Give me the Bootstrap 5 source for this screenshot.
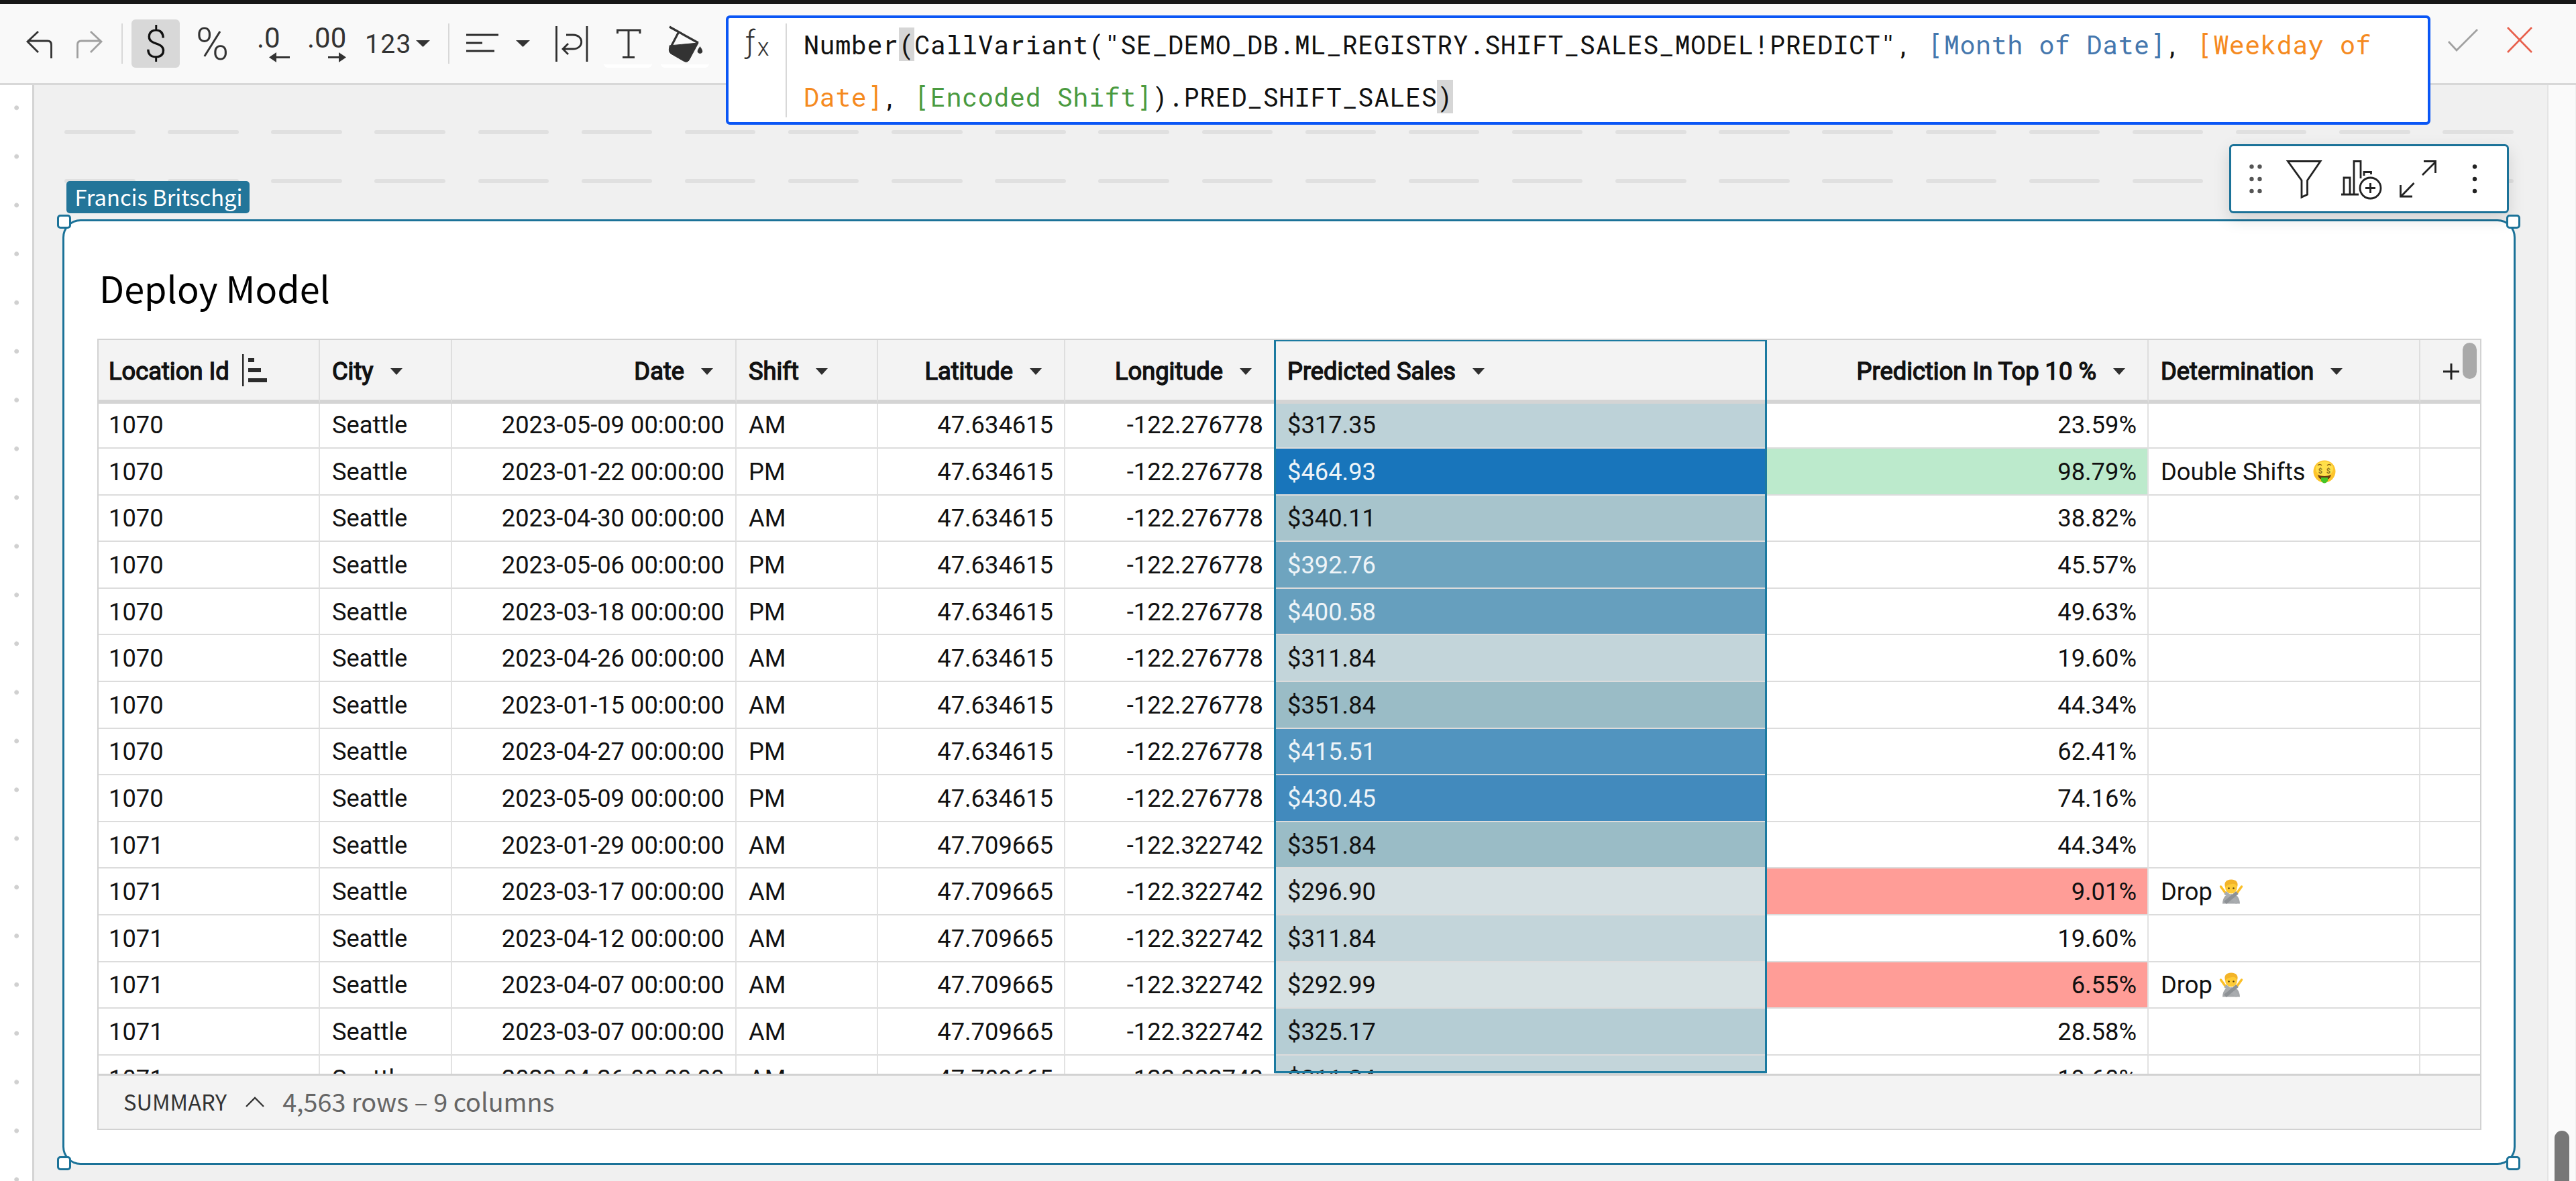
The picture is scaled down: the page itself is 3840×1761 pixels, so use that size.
<!DOCTYPE html>
<html lang="en">
<head>
    <meta charset="UTF-8">
    <meta name="viewport" content="width=device-width, initial-scale=1.0">
    <title>Deploy Model</title>
    <link href="https://cdn.jsdelivr.net/npm/bootstrap@5.3.3/dist/css/bootstrap.min.css" rel="stylesheet">
    <style>
        body { height: 1761px; font-family: Roboto, sans-serif; font-size: 36.3px; color: #111; background: #fff; }
        svg { display: block; flex: none; overflow: visible; }
        .ui-font { font-family: "Noto Sans CJK SC", sans-serif; }

        /* top toolbar */
        .topbar { height: 127px; flex: none; background: #f9f9f9; border-top: 6px solid #171717; border-bottom: 3px solid #d8d8d8; position: relative; z-index: 5; padding-left: 23px; }
        .tool { width: 72px; height: 72px; margin-top: 23px; flex: none; }
        .tool-on { background: #d8d8d8; border-radius: 6px; }
        .tool-color { border-bottom: 5px solid #fff; border-radius: 0 0 6px 6px; }
        .tool-sep { width: 2px; height: 60px; margin-top: 29px; background: #d8d8d8; flex: none; }
        .tool-num { margin-top: 37px; height: 46px; line-height: 46px; font-size: 39px; letter-spacing: 1.3px; color: #333; width: 76px; flex: none; }
        .formula { width: 2541px; height: 163px; margin: 17px 0 0 25px; border: 4px solid #0a56f5; border-radius: 6px; flex: none; }
        .formula-sep { width: 2px; height: 140px; margin: 8px 25px 0 24px; background: #d8d8d8; flex: none; }
        .formula-text { font-family: "Roboto Mono", "DejaVu Sans Mono", monospace; font-size: 38.4px; letter-spacing: .57px; line-height: 78px; white-space: pre; color: #111; }
        .paren { background: #d6d6d6; }
        .c-blue { color: #4577ad; }
        .c-orange { color: #f58a1f; }
        .c-green { color: #4a9a3f; }

        /* page canvas */
        .gutter { width: 51px; flex: none; border-right: 3px solid #d4d4d4; background: radial-gradient(circle at 24.7px 33.7px, #d0d0d0 3px, transparent 3.8px) 0 0 / 48px 72.65px repeat-y; }
        .canvas { background: #f0f0f0; padding: 67px 47px 0 42px; }
        .dashes { height: 6px; padding: 0 3px; }
        .dashes + .dashes { margin-top: 67px; }
        .dashes i { width: 105.5px; height: 6px; border-radius: 3px; background: #e0e0e0; }
        .scroll-col { width: 44px; flex: none; background: #fafafa; border-left: 2px solid #e4e4e4; border-right: 2px solid #eee; padding: 1559px 9px 0; }
        .scroll-col div { width: 22px; height: 120px; border-radius: 11px; background: #777; }

        /* selected element */
        .sheet { width: 3657px; height: 1410px; margin-top: 54px; background: #fff; border: 3px solid #1b7298; border-radius: 27px; padding: 50px 48px 0 49px; }
        .grip { position: absolute; width: 21px; height: 21px; border: 3px solid #1b7298; border-radius: 5px; background: #fff; }
        .grip-tl { left: -11px; top: -10px; }
        .grip-tr { right: -10px; top: -10px; }
        .grip-bl { left: -11px; bottom: -11px; }
        .grip-br { right: -10px; bottom: -11px; }
        .owner-tag { position: absolute; left: 3px; top: -60px; width: 273px; height: 48px; line-height: 45px; padding-left: 2px; border-radius: 5px; background: #237599; color: #fff; font-size: 32.7px; text-align: center; white-space: nowrap; }
        .float-bar { position: absolute; right: 7px; top: -115px; width: 417px; height: 103px; background: #fff; border: 3px solid #1b7298; border-radius: 6px; box-shadow: 0 9px 24px rgba(0, 0, 0, .13); }
        .sheet-title { height: 98px; line-height: 98px; margin: 0 0 27px 3px; font-size: 54px; color: #000; font-weight: 400; }

        /* data grid */
        .grid-box { width: 3554px; height: 1180px; border: 2px solid #d2d2d2; overflow: hidden; }
        .grid-rows { height: 1094px; overflow: hidden; }
        .grid-rows table { table-layout: fixed; width: 3550px; border-collapse: separate; border-spacing: 0; }
        .grid-rows th { height: 95px; padding: 5px 33px 0 18px; background: #f3f3f3; border-right: 2px solid #dedede; border-bottom: 6px solid #d4d4d4; font-weight: 400; -webkit-text-stroke: 1.4px #111; white-space: nowrap; }
        .grid-rows td { height: 69.6px; padding: 2px 16px 0 18px; border-right: 2px solid #e2e2e2; border-bottom: 2px solid #dcdcdc; line-height: 60px; white-space: nowrap; }
        .grid-rows tbody tr:first-child td { height: 67px; padding-top: 0; padding-bottom: 1px; }
        .grid-rows th:first-child, .grid-rows td:first-child { padding-left: 15px; }
        .grid-rows th:last-child, .grid-rows td:last-child { border-right: 0; }
        .arrow-down { border: 9.5px solid transparent; border-top: 10px solid #2f2f2f; border-bottom: 0; margin-left: 25px; }
        .td-light { color: #eef4f8; }
        .td-high { background: #bceacc; }
        .td-low { background: #ff9d97; }
        .face { display: inline-block; vertical-align: -6px; margin-left: 11px; }
        .col-focus { position: absolute; left: 1752px; top: -1px; width: 735px; height: 1094px; border: 3px solid #1b7aa0; }
        .grid-thumb { position: absolute; right: 5px; top: 4px; width: 21px; height: 54px; border-radius: 11px; background: #a9a9a9; }
        .grid-foot { height: 83px; border-top: 3px solid #d2d2d2; background: #f3f3f3; padding: 0 0 4px 37px; }
        .foot-label { font-size: 32.7px; color: #333; }
        .foot-count { font-size: 37.8px; color: #666; }
    </style>
</head>

<body class="d-flex flex-column overflow-hidden">
    <header class="topbar d-flex align-items-start">
        <svg class="tool" viewBox="23 29 72 72" fill="none" stroke="#333" stroke-width="2.8"><path d="M57 47 41 62 57 78M41 61H71Q76.500 61 76.500 67V87"/></svg>
        <svg class="tool" viewBox="95 29 72 72" fill="none" stroke="#a0a0a0" stroke-width="2.8"><path d="M135 47 151 62 135 78M151 61H121Q115.500 61 115.500 67V87"/></svg>
        <div class="tool-sep" style="margin-left: 14px"></div>
        <svg class="tool tool-on" style="margin-left: 13px" viewBox="196 29 72 72"><text x="232" y="86" text-anchor="middle" font-size="59" font-weight="300" fill="#111">$</text></svg>
        <svg class="tool" style="margin-left: 12px" viewBox="280 29 72 72"><text x="316.500" y="89" text-anchor="middle" font-size="67" font-weight="300" fill="#333">%</text></svg>
        <svg class="tool" style="margin-left: 21px" viewBox="373 29 72 72" fill="#333"><text x="383" y="71" font-size="42">.0</text><path d="M412 84H432V87H412V93L401 85.500 412 78Z"/></svg>
        <svg class="tool" style="margin-left: 7px" viewBox="452 29 72 72" fill="#333"><text x="458" y="71" font-size="42">.00</text><path d="M505 84H489V87H505V93L516 85.500 505 78Z"/></svg>
        <div class="tool-num" style="margin-left: 20px">123</div>
        <svg width="21" height="10" style="margin-top: 54px" viewBox="0 0 21 10"><path d="M0 0H21L10.500 10Z" fill="#333"/></svg>
        <div class="tool-sep" style="margin-left: 27px"></div>
        <svg class="tool" style="margin-left: 13px" viewBox="683 29 72 72" stroke="#2b2b2b" stroke-width="3"><path d="M695 52H743M695 64H719M695 76H737"/></svg>
        <svg width="21" height="10" style="margin: 54px 26px 0 14px" viewBox="0 0 21 10"><path d="M0 0H21L10.500 10Z" fill="#333"/></svg>
        <svg class="tool" viewBox="816 29 72 72" fill="none" stroke="#2f2f2f" stroke-width="2.800"><path d="M829.500 39V92M875 39V92M844 52H854C871 52 871 73 854 73H839M847 65 839 73 847 81"/></svg>
        <div class="tool tool-color" style="margin-left: 12px"><svg width="72" height="66" viewBox="900 29 72 66" fill="none" stroke="#333" stroke-width="3"><path d="M920.500 50V45H954V50M937 45V86M928 85.500H946"/></svg></div>
        <div class="tool tool-color" style="margin-left: 13px"><svg width="72" height="66" viewBox="985 29 72 66" fill="none" stroke="#333" stroke-width="3.200"><path d="M998 40 1041 64M1011 49 999 72"/><path d="M998 68 1041 64 1027 90Q1024 94 1019 91L1000 80Q996 77 998 70Z" fill="#333" stroke-width="1"/><path d="M1043.500 69C1046 73 1048 75 1047 78Q1043.500 82 1040 78C1039 75 1041 73 1043.500 69Z" fill="#333" stroke="none"/></svg></div>
        <div class="formula bg-white d-flex">
            <svg width="60" height="80" style="margin-left: 1px" viewBox="1087 27 60 80" fill="#333"><text x="1111" y="79" font-size="46" font-family="Roboto" font-weight="300">ƒ</text><text x="1129" y="83" font-size="36" font-family="Roboto" font-weight="300">x</text></svg>
            <div class="formula-sep"></div>
            <div class="formula-text">Number<span class="paren">(</span>CallVariant("SE_DEMO_DB.ML_REGISTRY.SHIFT_SALES_MODEL!PREDICT", <span class="c-blue">[Month of Date]</span>, <span class="c-orange">[Weekday of</span>
<span class="c-orange">Date]</span>, <span class="c-green">[Encoded Shift]</span>).PRED_SHIFT_SALES<span class="paren">)</span></div>
        </div>
        <svg width="130" height="60" style="margin-left: 19px; margin-top: 24px" viewBox="3642 30 130 60" fill="none" stroke-width="2.600"><path d="M3650 62 3662 75 3693 44" stroke="#a0a0a0"/><path d="M3738 41 3774 78M3774 41 3738 78" stroke="#e8604c"/></svg>
    </header>

    <main class="d-flex flex-grow-1">
        <div class="gutter"></div>
        <div class="canvas flex-grow-1">
            <div class="dashes d-flex justify-content-between"></div>
            <div class="dashes d-flex justify-content-between"></div>

            <section class="sheet position-relative">
                <div class="owner-tag ui-font">Francis Britschgi</div>
                <div class="float-bar">
                    <svg width="411" height="97" viewBox="3326 218 411 97" fill="none" stroke="#222" stroke-width="2.800">
                        <g fill="#555" stroke="none"><circle cx="3356.500" cy="248.500" r="3.200"/><circle cx="3368.500" cy="248.500" r="3.200"/><circle cx="3356.500" cy="267" r="3.200"/><circle cx="3368.500" cy="267" r="3.200"/><circle cx="3356.500" cy="285" r="3.200"/><circle cx="3368.500" cy="285" r="3.200"/></g>
                        <path d="M3410.500 240.500H3459L3439.500 269V290L3431 294V269Z"/>
                        <path d="M3490 290H3516M3494 289V265H3503V289M3509 289V240.500H3519V266M3524 262V256.500H3534.500V260"/>
                        <circle cx="3533.500" cy="280.500" r="15.500"/><path d="M3533.500 273V288M3526 280.500H3541"/>
                        <path d="M3611 261 3630 242M3613 240.500H3630.500V258M3598.500 273 3580 292M3578.500 276V293H3596"/>
                        <g fill="#222" stroke="none"><circle cx="3689" cy="248.500" r="3.200"/><circle cx="3689" cy="267" r="3.200"/><circle cx="3689" cy="285" r="3.200"/></g>
                    </svg>
                </div>
                <h1 class="sheet-title ui-font">Deploy Model</h1>

                <div class="grid-box position-relative">
                    <div class="grid-rows">
                        <table>
                            <colgroup>
                                <col style="width: 330px"><col style="width: 197px"><col style="width: 424px"><col style="width: 211px"><col style="width: 279px">
                                <col style="width: 313px"><col style="width: 733px"><col style="width: 569px"><col style="width: 405px"><col style="width: 89px">
                            </colgroup>
                            <thead><tr id="grid-head"></tr></thead>
                            <tbody id="grid-body"></tbody>
                        </table>
                    </div>
                    <div class="grid-foot d-flex align-items-center ui-font">
                        <span class="foot-label">SUMMARY</span>
                        <svg width="28" height="16" style="margin: 2px 27px 0 28px" viewBox="0 0 28 16" fill="none" stroke="#333" stroke-width="2.400"><path d="M1 15 14 2 27 15"/></svg>
                        <span class="foot-count">4,563 rows – 9 columns</span>
                    </div>
                    <div class="col-focus"></div>
                    <div class="grid-thumb"></div>
                </div>

                <div class="grip grip-tl"></div>
                <div class="grip grip-tr"></div>
                <div class="grip grip-bl"></div>
                <div class="grip grip-br"></div>
            </section>
        </div>
        <div class="scroll-col"><div></div></div>
    </main>

    <script src="https://cdn.jsdelivr.net/npm/bootstrap@5.3.3/dist/js/bootstrap.bundle.min.js"></script>
    <script>
        const sortIcon = `<svg width="38" height="48" style="margin-left: 19px" viewBox="360 529 38 48" fill="#2b2b2b"><path d="M360 527H362.500V575H360ZM369 533H378V539H369ZM369 548H388V554H369ZM369 563H397V569H369Z"/></svg>`;
        const plusIcon = `<svg width="24" height="24" style="margin-left: 16px" viewBox="0 0 24 24" fill="none" stroke="#222" stroke-width="3"><path d="M12 0V24M0 12H24"/></svg>`;

        const moneyFace = `<svg class="face" width="34" height="36" viewBox="0 0 34 36">
            <ellipse cx="17" cy="17" rx="16.500" ry="16.500" fill="#fdc42c"/><ellipse cx="17" cy="13" rx="13" ry="11" fill="#ffdf4a"/>
            <path d="M7 8Q10 5 13 8M21 8Q24 5 27 8" stroke="#8a5a10" stroke-width="1.500" fill="none"/>
            <g font-size="11" font-weight="700" fill="#8d7420" text-anchor="middle"><text x="11" y="20">$</text><text x="23" y="20">$</text></g>
            <path d="M7 22Q17 26 27 22Q25 30 17 30Q9 30 7 22Z" fill="#6b3a10"/><path d="M12 26H22V31Q17 38 12 31Z" fill="#45c526"/></svg>`;
        const noPerson = `<svg class="face" width="34" height="37" viewBox="0 0 34 37">
            <path d="M1.500 11 8 20M32.500 11 26 20" stroke="#fbbf27" stroke-width="3.500" stroke-linecap="round"/>
            <path d="M4 36.500Q4 30 8 25L17 22 26 25Q30 30 30 36.500Z" fill="#a5a8ab"/>
            <ellipse cx="17" cy="12" rx="9" ry="9.500" fill="#fecb36"/><path d="M8 12Q5 1 17 .5Q29 1 26 12Q24 6 18 7Q11 8 8 12Z" fill="#f3b429"/>
            <circle cx="13.500" cy="13.500" r="1.300" fill="#5b4413"/><circle cx="20.500" cy="13.500" r="1.300" fill="#5b4413"/>
            <path d="M8 20 26 35" stroke="#a9acaf" stroke-width="5.500"/><path d="M26 20 8 35" stroke="#8d9195" stroke-width="5.500"/></svg>`;

        const headers = [
            ["Location Id", ""], ["City", ""], ["Date", "end"], ["Shift", ""], ["Latitude", "end"],
            ["Longitude", "end"], ["Predicted Sales", ""], ["Prediction In Top 10 %", "end"], ["Determination", ""]
        ];

        // date, shift, sales, cell colour, percent
        const rows = [
            ["2023-05-09", "AM", "317.35", "#bdd2d8", "23.59"],
            ["2023-01-22", "PM", "464.93", "#1875bb", "98.79"],
            ["2023-04-30", "AM", "340.11", "#a7c4cc", "38.82"],
            ["2023-05-06", "PM", "392.76", "#6ea4bf", "45.57"],
            ["2023-03-18", "PM", "400.58", "#669fbe", "49.63"],
            ["2023-04-26", "AM", "311.84", "#c3d5da", "19.60"],
            ["2023-01-15", "AM", "351.84", "#9abcc6", "44.34"],
            ["2023-04-27", "PM", "415.51", "#5194bf", "62.41"],
            ["2023-05-09", "PM", "430.45", "#428abd", "74.16"],
            ["2023-01-29", "AM", "351.84", "#9abcc6", "44.34"],
            ["2023-03-17", "AM", "296.90", "#d4dfe2", "9.01"],
            ["2023-04-12", "AM", "311.84", "#c3d5da", "19.60"],
            ["2023-04-07", "AM", "292.99", "#d7e1e3", "6.55"],
            ["2023-03-07", "AM", "325.17", "#b5cdd4", "28.58"],
            ["2023-04-26", "AM", "311.84", "#c3d5da", "19.60"]
        ];

        document.getElementById("grid-head").innerHTML = headers.map(([name, align], i) => `
            <th><div class="d-flex align-items-center justify-content-${align || "start"}">${name}${i === 0 ? sortIcon : '<span class="arrow-down"></span>'}</div></th>
        `).join("") + `<th>${plusIcon}</th>`;

        document.getElementById("grid-body").innerHTML = rows.map(([date, shift, sales, color, pct], i) => {
            const first = i < 9;
            const level = pct > 90 ? "td-high" : pct < 10 ? "td-low" : "";
            const note = pct > 90 ? "Double Shifts" + moneyFace : pct < 10 ? "Drop" + noPerson : "";
            return `
                <tr>
                    <td>${first ? 1070 : 1071}</td>
                    <td>Seattle</td>
                    <td class="text-end">${date} 00:00:00</td>
                    <td>${shift}</td>
                    <td class="text-end">${first ? "47.634615" : "47.709665"}</td>
                    <td class="text-end">${first ? "-122.276778" : "-122.322742"}</td>
                    <td class="${sales > 390 ? "td-light" : ""}" style="background: ${color}">$${sales}</td>
                    <td class="text-end ${level}">${pct}%</td>
                    <td>${note}</td>
                    <td></td>
                </tr>
            `;
        }).join("");

        document.querySelectorAll(".dashes").forEach(line => {
            line.innerHTML = "<i></i>".repeat(24);
        });
    </script>
</body>
</html>
